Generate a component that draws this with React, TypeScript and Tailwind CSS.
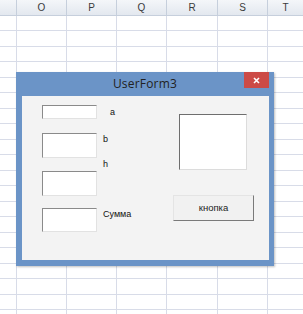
import React from 'react';

const columns = [
  { name: '', width: 'w-[17px]' },
  { name: 'O', width: 'w-[50px]' },
  { name: 'P', width: 'w-[50px]' },
  { name: 'Q', width: 'w-[50px]' },
  { name: 'R', width: 'w-[51px]' },
  { name: 'S', width: 'w-[50px]' },
  { name: 'T', width: 'w-[35px]' },
];

const rowHeights = Array.from({ length: 20 }, (_, i) => (i % 2 === 0 ? 'h-[15px]' : 'h-[16px]'));

function TextBox({ h }: { h: string }) {
  return (
    <div
      className={`w-[55px] ${h} shrink-0 bg-white border border-t-[#8a8a8a] border-l-[#8a8a8a] border-r-[#e2e2e2] border-b-[#e2e2e2]`}
    />
  );
}

export default function App() {
  return (
    <div
      className="relative w-[303px] h-[314px] overflow-hidden bg-white"
      style={{ fontFamily: '"Liberation Sans", Arial, sans-serif' }}
    >
      {/* column headers */}
      <div className="flex h-[16px] bg-gradient-to-b from-[#f4f6f9] to-[#e3e8ef] border-b border-[#c6cfdc]">
        {columns.map((c, i) => (
          <div
            key={i}
            className={`${c.width} shrink-0 flex items-center justify-center text-[10px] text-[#3b3b3b] ${
              i < columns.length - 1 ? 'border-r border-[#c6cfdc]' : ''
            }`}
          >
            {c.name}
          </div>
        ))}
      </div>

      {/* sheet grid */}
      <div className="flex flex-col">
        {rowHeights.map((rh, r) => (
          <div key={r} className={`flex ${rh} border-b border-[#d8dce8]`}>
            {columns.map((c, i) => (
              <div
                key={i}
                className={`${c.width} shrink-0 ${i < columns.length - 1 ? 'border-r border-[#d8dce8]' : ''}`}
              />
            ))}
          </div>
        ))}
      </div>

      {/* UserForm window */}
      <div className="absolute left-[16px] top-[72px] w-[258px] h-[194px] bg-[#6b94c7] flex flex-col shadow-[1px_1px_2px_rgba(0,0,0,0.25)]">
        <div className="relative h-[24px] flex items-center justify-center">
          <span className="text-[12px] text-[#222] tracking-[0.2px]" style={{ fontFamily: '"Open Sans", sans-serif' }}>
            UserForm3
          </span>
          <div className="absolute right-[5px] top-0 w-[25px] h-[16px] bg-[#cc4b46] flex items-center justify-center">
            <svg width="7" height="7" viewBox="0 0 7 7">
              <path d="M1 1 L6 6 M6 1 L1 6" stroke="white" strokeWidth="1.6" />
            </svg>
          </div>
        </div>

        <div className="ml-[6px] mr-[5px] h-[164px] bg-[#f3f3f3] flex text-[9px] text-[#111]">
          {/* left controls */}
          <div className="w-[151px] shrink-0 pl-[20px] pt-[9px] flex flex-col">
            <div className="flex items-center h-[14px]">
              <TextBox h="h-[14px]" />
              <span className="ml-[13px] leading-[10px]">a</span>
            </div>
            <div className="mt-[14px] h-[25px] flex items-start">
              <TextBox h="h-[25px]" />
              <div className="ml-[6px] flex flex-col leading-[10px]">
                <span className="mt-[1px]">b</span>
                <span className="mt-[15px]">h</span>
              </div>
            </div>
            <div className="mt-[13px] h-[25px]">
              <TextBox h="h-[25px]" />
            </div>
            <div className="mt-[12px] h-[24px] flex items-start">
              <TextBox h="h-[24px]" />
              <span className="ml-[6px] mt-[1px] leading-[10px]">Сумма</span>
            </div>
          </div>

          {/* right controls */}
          <div className="pt-[18px] flex flex-col">
            <div className="ml-[6px] w-[68px] h-[56px] bg-white border border-t-[#6e6e6e] border-l-[#6e6e6e] border-r-[#dcdcdc] border-b-[#dcdcdc]" />
            <button className="mt-[25px] w-[81px] h-[26px] bg-[#f1f1f1] border border-t-[#e4e4e4] border-l-[#e4e4e4] border-r-[#7a7a7a] border-b-[#7a7a7a] text-[9.5px] text-[#222] flex items-center justify-center">
              кнопка
            </button>
          </div>
        </div>
      </div>
    </div>
  );
}
